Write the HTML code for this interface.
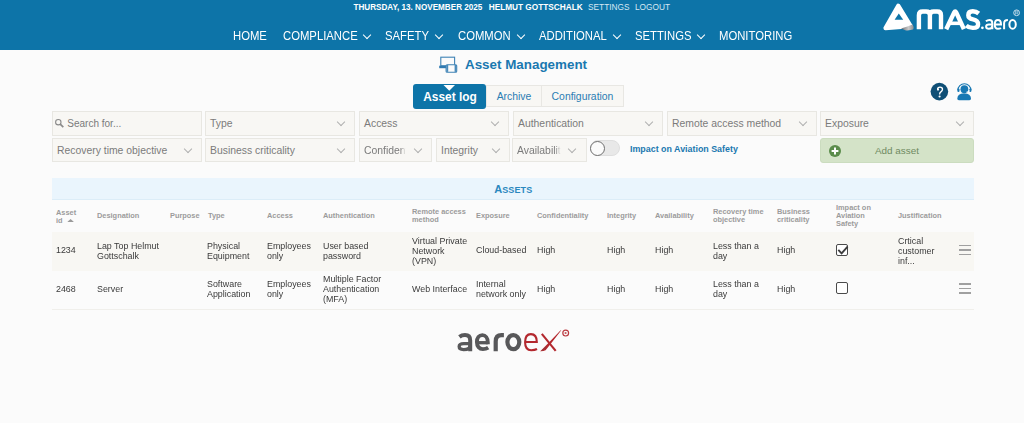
<!DOCTYPE html>
<html><head><meta charset="utf-8">
<style>
*{box-sizing:border-box;margin:0;padding:0}
html,body{width:1024px;height:423px;overflow:hidden;background:#fbfbfb;font-family:"Liberation Sans",sans-serif;position:relative}
.a{position:absolute;white-space:nowrap}
#hdr{position:absolute;left:0;top:0;width:1024px;height:50px;background:#0d74a8}
.top{font-size:8.3px;color:#fff;top:2px;line-height:10px}
.top.n{color:#d6e8f3}
.nav{font-size:11.3px;color:#fff;top:28px;line-height:14px;transform-origin:0 0;transform:scaleY(1.08)}
.chev{position:absolute;width:6px;height:6px;border-right:1.2px solid #fff;border-bottom:1.2px solid #fff;transform:rotate(45deg)}
.title{left:465px;top:57px;font-size:13.4px;font-weight:bold;color:#1a78b0;line-height:16px}
.tab{position:absolute;top:85px;height:22px;font-size:10.4px;color:#2a7cb3;text-align:center;line-height:21px;background:#f8f7f4;border:1px solid #e8e7e3}
.tab.act{top:84px;height:25px;background:#0d74a8;color:#fff;font-weight:bold;font-size:11.9px;border:none;border-radius:3px;line-height:26px;padding-left:1px}
.fl{position:absolute;height:24px;background:#f8f7f4;border:1px solid #e8e7e2;font-size:10.4px;color:#7b7b7b;line-height:23.5px;padding-left:4px;white-space:nowrap;overflow:hidden}
.fl .c{position:absolute;top:6.5px;width:6px;height:6px;border-right:1px solid #b0b0b0;border-bottom:1px solid #b0b0b0;transform:rotate(45deg)}
.th{position:absolute;font-size:7.4px;color:#9b9b9b;font-weight:bold;line-height:7.9px;white-space:nowrap}
.td{position:absolute;font-size:8.9px;color:#3a3a3a;line-height:9.1px;transform-origin:0 0;transform:scaleY(1.1);white-space:nowrap}
.cb{position:absolute;width:12px;height:12px;border:1.6px solid #4a4a4a;border-radius:2px;background:#fff}
.hb{position:absolute;width:12px;height:12px}
.hb i{position:absolute;left:0;width:12px;height:1.6px;background:#a0a0a0}
</style></head><body>
<div id="hdr"></div>
<div class="a top" style="top:2.6px;left:353.5px;font-weight:bold;font-size:8.15px">THURSDAY, 13. NOVEMBER 2025</div>
<div class="a top" style="top:2.6px;left:488.7px;font-weight:bold;font-size:8.25px">HELMUT GOTTSCHALK</div>
<div class="a top n" style="left:588px">SETTINGS</div>
<div class="a top n" style="left:635px">LOGOUT</div>

<div class="a nav" style="left:233px">HOME</div>
<div class="a nav" style="left:283px">COMPLIANCE</div><div class="chev" style="left:364px;top:31.5px"></div>
<div class="a nav" style="left:385px">SAFETY</div><div class="chev" style="left:436px;top:31.5px"></div>
<div class="a nav" style="left:458px">COMMON</div><div class="chev" style="left:518px;top:31.5px"></div>
<div class="a nav" style="left:539px">ADDITIONAL</div><div class="chev" style="left:614px;top:31.5px"></div>
<div class="a nav" style="left:635px">SETTINGS</div><div class="chev" style="left:698px;top:31.5px"></div>
<div class="a nav" style="left:719px">MONITORING</div>

<!-- AMAS logo -->
<svg class="a" style="left:880px;top:0" width="144" height="40" viewBox="880 0 144 40">
  <defs><linearGradient id="curl" x1="0" y1="0" x2="1" y2="0"><stop offset="0" stop-color="#6d6f73"/><stop offset="0.6" stop-color="#c9c9c9"/><stop offset="1" stop-color="#8f9194"/></linearGradient></defs>
  <path d="M898.3 5.8 L910.6 26.1 L885.6 28 Z" fill="#fff" stroke="#fff" stroke-width="4.4" stroke-linejoin="round"/>
  <path d="M898.8 13.4 L903.2 19.8 L894.6 19.8 Z" fill="#0d74a8"/>
  <path d="M901 28.6 Q908 26.5 912.5 24.6 Q914.5 27.5 913 29.6 Q910.5 30.6 906 30.4 Z" fill="url(#curl)"/>
  <g fill="none" stroke="#fff" stroke-width="4.2" stroke-linecap="butt" stroke-linejoin="round">
    <path d="M918.9 29.2 V15.2 Q918.9 11.5 922.6 11.5 H926.2 Q929.9 11.5 929.9 15.2 V29.2 M929.9 15.2 Q929.9 11.5 933.6 11.5 H937.3 Q941 11.5 941 15.2 V29.2" stroke-width="4.4"/>
    <path d="M946.2 29.2 L954.2 12.4 Q955.2 10.4 956.2 12.4 L963.9 29.2" stroke-width="4.4"/>
    <path d="M949.6 23.3 H960.5" stroke-width="3.6"/>
    <path d="M978.7 13.5 Q976.2 11.3 972.8 11.3 Q968.3 11.3 968.3 15.2 Q968.3 18.4 973 19.3 Q978.1 20.3 978.1 24.2 Q978.1 27.9 972.8 27.9 Q968.8 27.9 966.2 25.6" stroke-width="4.4"/>
  </g>
  <circle cx="982.4" cy="27.8" r="1.35" fill="#fff"/>
  <g fill="none" stroke="#fff" stroke-width="2">
    <path d="M985.9 21.3 Q987.6 20 989.5 20 Q992.3 20 992.3 23.2 V29.3 M992.3 24.4 H989 Q986.1 24.4 986.1 26.6 Q986.1 28.8 988.8 28.8 Q992.3 28.8 992.3 25.8"/>
    <path d="M994.8 24.4 H1001 Q1001 20 997.9 20 Q994.8 20 994.8 24.4 Q994.8 28.8 998 28.8 Q999.8 28.8 1000.9 27.9"/>
    <path d="M1004.1 29.3 V23.4 Q1004.1 20.1 1007.9 20.1"/>
    <ellipse cx="1012.6" cy="24.4" rx="3.2" ry="4.4"/>
  </g>
  <circle cx="1016.6" cy="12.8" r="2.9" fill="none" stroke="#d8e9f3" stroke-width="0.9"/>
  <path d="M1015.6 14.6 V11 H1017 Q1018 11 1018 12 Q1018 13 1017 13 H1015.6 M1017 13 L1018 14.6" fill="none" stroke="#d8e9f3" stroke-width="0.6"/>
</svg>

<!-- title icon -->
<svg class="a" style="left:436px;top:53px" width="24" height="22" viewBox="436 53 24 22">
  <rect x="440.8" y="57.2" width="13.8" height="8.6" fill="none" stroke="#3f83b5" stroke-width="1.1"/>
  <rect x="439.2" y="65.7" width="7.2" height="2.5" fill="#2f7ab2"/>
  <rect x="446.1" y="64.7" width="10.6" height="7.5" rx="1" fill="#fbfbfb" stroke="#3f83b5" stroke-width="1.1"/>
  <rect x="446.4" y="65" width="1.8" height="6.9" fill="#4a8bbb"/>
  <rect x="454.6" y="65" width="1.8" height="6.9" fill="#4a8bbb"/>
</svg>
<div class="a title">Asset Management</div>

<div class="tab" style="left:486px;width:56px">Archive</div>
<div class="tab" style="left:541px;width:83px">Configuration</div>
<div class="tab act" style="left:413px;width:73px">Asset log</div>
<svg class="a" style="left:443px;top:84px" width="13" height="8"><path d="M0.5 0.9 L12 0.9 L6.25 6.8 Z" fill="#fff"/></svg>

<!-- help / support icons -->
<svg class="a" style="left:928px;top:78px" width="50" height="26" viewBox="928 78 50 26">
  <circle cx="939.4" cy="91.6" r="8.8" fill="#0f4f76"/>
  <path d="M937.6 89.3 Q937.6 87.1 940 87.1 Q942.5 87.1 942.5 89.3 Q942.5 90.9 940.9 91.9 Q939.6 92.8 939.6 94.5" fill="none" stroke="#fff" stroke-width="1.35"/>
  <circle cx="938" cy="89.6" r="1.05" fill="#fff"/>
  <circle cx="939.6" cy="96.5" r="1.1" fill="#fff"/>
  <path d="M957.9 90.2 A6.5 6.5 0 0 1 970.9 90.2" fill="none" stroke="#1878b3" stroke-width="1.1"/>
  <rect x="957.4" y="88.4" width="2.1" height="3.6" rx="1" fill="#1878b3"/>
  <rect x="969.3" y="88.4" width="2.1" height="3.6" rx="1" fill="#1878b3"/>
  <circle cx="964.4" cy="89.2" r="3.9" fill="#1878b3"/>
  <path d="M957.3 98.8 Q957.3 93.3 964.1 93.2 Q971 93.3 971 98.8 Q971 100.2 969.4 100.2 L958.9 100.2 Q957.3 100.2 957.3 98.8 Z" fill="#1878b3"/>
  <path d="M966.2 92.3 Q967.6 91.8 969.6 90.6" fill="none" stroke="#fbfbfb" stroke-width="0.7"/>
</svg>

<!-- filters -->
<div class="fl" style="left:52px;top:111px;height:25px;width:150px;padding-left:14.3px;font-size:10px">Search for...</div>
<svg class="a" style="left:54px;top:118px" width="11" height="11"><circle cx="4.3" cy="4.2" r="2.7" fill="none" stroke="#8a8a8a" stroke-width="1.1"/><path d="M6.2 6.1 L9.3 9.1" stroke="#8a8a8a" stroke-width="1.7"/></svg>
<div class="fl" style="left:205px;top:111px;height:25px;width:150px">Type<i class="c" style="left:132px"></i></div>
<div class="fl" style="left:359px;top:111px;height:25px;width:150px">Access<i class="c" style="left:132px"></i></div>
<div class="fl" style="left:513px;top:111px;height:25px;width:150px">Authentication<i class="c" style="left:132px"></i></div>
<div class="fl" style="left:667px;top:111px;height:25px;width:150px">Remote access method<i class="c" style="left:132px"></i></div>
<div class="fl" style="left:820px;top:111px;height:25px;width:154px">Exposure<i class="c" style="left:136px"></i></div>

<div class="fl" style="left:52px;top:138px;width:150px">Recovery time objective<i class="c" style="left:132px"></i></div>
<div class="fl" style="left:205px;top:138px;width:150px">Business criticality<i class="c" style="left:132px"></i></div>
<div class="fl" style="left:359px;top:138px;width:73px"><span style="display:inline-block;width:42px;overflow:hidden;vertical-align:top;-webkit-mask-image:linear-gradient(to right,#000 86%,transparent 100%)">Confidentiality</span><i class="c" style="left:55px"></i></div>
<div class="fl" style="left:436px;top:138px;width:74px">Integrity<i class="c" style="left:56px"></i></div>
<div class="fl" style="left:512px;top:138px;width:75px"><span style="display:inline-block;width:44px;overflow:hidden;vertical-align:top;-webkit-mask-image:linear-gradient(to right,#000 86%,transparent 100%)">Availability</span><i class="c" style="left:56px"></i></div>

<!-- toggle -->
<div class="a" style="left:590px;top:140.2px;width:29.5px;height:16px;border-radius:8px;background:#e8e8e8;border:1px solid #dedede"></div>
<div class="a" style="left:590px;top:140.6px;width:15px;height:15px;border-radius:50%;background:#fbfbfb;border:1.4px solid #6e6e6e"></div>
<div class="a" style="left:630px;top:144.4px;font-size:8.9px;font-weight:bold;color:#1a78b0;line-height:10px">Impact on Aviation Safety</div>

<!-- add asset -->
<div class="a" style="left:820px;top:138px;width:154px;height:25px;border-radius:3px;background:#d4e3c8;border:1px solid #cbdcbf"></div>
<svg class="a" style="left:827.6px;top:144.2px" width="14" height="14"><circle cx="7" cy="7" r="6" fill="#5b8c4b"/><path d="M7 3.6 V10.4 M3.6 7 H10.4" stroke="#fff" stroke-width="2"/></svg>
<div class="a" style="left:875px;top:145px;font-size:9.9px;color:#6f8a62;line-height:11px">Add asset</div>

<!-- table -->
<div class="a" style="left:52px;top:178px;width:922px;height:22px;background:#eaf5fd;border-bottom:1px solid #dcedf8"></div>
<div class="a" style="left:494.3px;top:183px;font-size:11px;font-weight:bold;color:#2b88bf;line-height:12px">A<span style="font-size:9px;letter-spacing:0.1px">SSETS</span></div>

<div class="th" style="left:56px;top:208.7px">Asset<br>id</div>
<svg class="a" style="left:67px;top:217.5px" width="8" height="5"><path d="M0.3 4 L3.6 1 L6.9 4 Z" fill="#9a9a9a"/></svg>
<div class="th" style="left:97px;top:212.3px">Designation</div>
<div class="th" style="left:170px;top:212.3px">Purpose</div>
<div class="th" style="left:208px;top:212.3px">Type</div>
<div class="th" style="left:267px;top:212.3px">Access</div>
<div class="th" style="left:323px;top:212.3px">Authentication</div>
<div class="th" style="left:412px;top:207.7px">Remote access<br>method</div>
<div class="th" style="left:476px;top:212.3px">Exposure</div>
<div class="th" style="left:537px;top:212.3px">Confidentiality</div>
<div class="th" style="left:607px;top:212.3px">Integrity</div>
<div class="th" style="left:655px;top:212.3px">Availability</div>
<div class="th" style="left:713px;top:207.7px">Recovery time<br>objective</div>
<div class="th" style="left:777px;top:207.7px">Business<br>criticality</div>
<div class="th" style="left:836px;top:203.7px">Impact on<br>Aviation<br>Safety</div>
<div class="th" style="left:898px;top:212.3px">Justification</div>

<div class="a" style="left:52px;top:232px;width:922px;height:39px;background:#f8f7f3"></div>
<div class="a" style="left:52px;top:309px;width:922px;height:1px;background:#f0efeb"></div>

<div class="td" style="left:56px;top:245.3px">1234</div>
<div class="td" style="left:97px;top:240.5px">Lap Top Helmut<br>Gottschalk</div>
<div class="td" style="left:207px;top:240.5px">Physical<br>Equipment</div>
<div class="td" style="left:267px;top:240.5px">Employees<br>only</div>
<div class="td" style="left:323px;top:240.5px">User based<br>password</div>
<div class="td" style="left:412px;top:235.7px">Virtual Private<br>Network<br>(VPN)</div>
<div class="td" style="left:476px;top:245.3px">Cloud-based</div>
<div class="td" style="left:537px;top:245.3px">High</div>
<div class="td" style="left:607px;top:245.3px">High</div>
<div class="td" style="left:655px;top:245.3px">High</div>
<div class="td" style="left:713px;top:240.5px">Less than a<br>day</div>
<div class="td" style="left:777px;top:245.3px">High</div>
<div class="cb" style="left:836px;top:243.5px"></div>
<svg class="a" style="left:836px;top:243.5px" width="14" height="14"><path d="M2.3 5.9 L5.6 9.3 L11.6 2.6" fill="none" stroke="#3d3d3d" stroke-width="1.9"/></svg>
<div class="td" style="left:898px;top:235.7px">Crtical<br>customer<br>inf...</div>
<div class="hb" style="left:958.7px;top:244.3px"><i style="top:0.5px"></i><i style="top:5px"></i><i style="top:9.5px"></i></div>

<div class="td" style="left:56px;top:284.0px">2468</div>
<div class="td" style="left:97px;top:284.0px">Server</div>
<div class="td" style="left:207px;top:279.2px">Software<br>Application</div>
<div class="td" style="left:267px;top:279.2px">Employees<br>only</div>
<div class="td" style="left:323px;top:274.4px">Multiple Factor<br>Authentication<br>(MFA)</div>
<div class="td" style="left:412px;top:284.0px">Web Interface</div>
<div class="td" style="left:476px;top:279.2px">Internal<br>network only</div>
<div class="td" style="left:537px;top:284.0px">High</div>
<div class="td" style="left:607px;top:284.0px">High</div>
<div class="td" style="left:655px;top:284.0px">High</div>
<div class="td" style="left:713px;top:279.2px">Less than a<br>day</div>
<div class="td" style="left:777px;top:284.0px">High</div>
<div class="cb" style="left:836px;top:282.2px"></div>
<div class="hb" style="left:958.7px;top:282.6px"><i style="top:0.5px"></i><i style="top:5px"></i><i style="top:9.5px"></i></div>

<!-- aeroex logo -->
<svg class="a" style="left:450px;top:322px" width="130" height="36" viewBox="450 322 130 36">
  <g fill="none" stroke="#58585a" stroke-width="4.2">
    <path d="M459.4 336.9 Q461.8 335.1 465 335.1 Q470.2 335.1 470.2 340.4 V351.2" stroke-width="4"/>
    <path d="M470.2 343.65 H463.9 Q459.15 343.65 459.15 346.6 Q459.15 349.55 463.6 349.55 Q470.2 349.55 470.2 345.2" stroke-width="3.3"/>
    <path d="M476.9 342.7 H487.8" stroke-width="3.3"/>
    <path d="M487.8 344.3 V342.5 C487.8 338 485.5 335.1 482.35 335.1 C479.2 335.1 476.9 338 476.9 342.1 C476.9 346.5 479.3 349.1 482.9 349.1 C485 349.1 486.7 348.6 488.2 347.6" stroke-width="3.9"/>
    <path d="M495.7 351.2 V341.5 Q495.7 335.2 501.5 335.2 H503.9"/>
    <ellipse cx="513.35" cy="342.1" rx="5.95" ry="7"/>
  </g>
  <g fill="none" stroke="#b3282e" stroke-width="2.1">
    <path d="M525.1 342 H536.8 Q536.8 334.1 530.9 334.1 Q525.1 334.1 525.1 342.3 Q525.1 350.3 531.2 350.3 Q534.9 350.3 537 349"/>
    <path d="M541.8 333.8 L555.7 350.9"/>
  </g>
  <path d="M540.2 351.2 Q543.5 351.3 545.6 350.2 Q553 341 561.3 330.2 L560.4 330.4 Q549 342.5 540.2 351.2 Z" fill="#b3282e"/>
  <path d="M542 350.5 L546.6 346.8" stroke="#6a4a4c" stroke-width="0.9" stroke-dasharray="1.2 0.8"/>
  <circle cx="565.7" cy="333.1" r="2.9" fill="none" stroke="#bb3a40" stroke-width="1.2"/>
  <circle cx="565.6" cy="333" r="1.1" fill="#c45a5e"/>
</svg>
</body></html>
